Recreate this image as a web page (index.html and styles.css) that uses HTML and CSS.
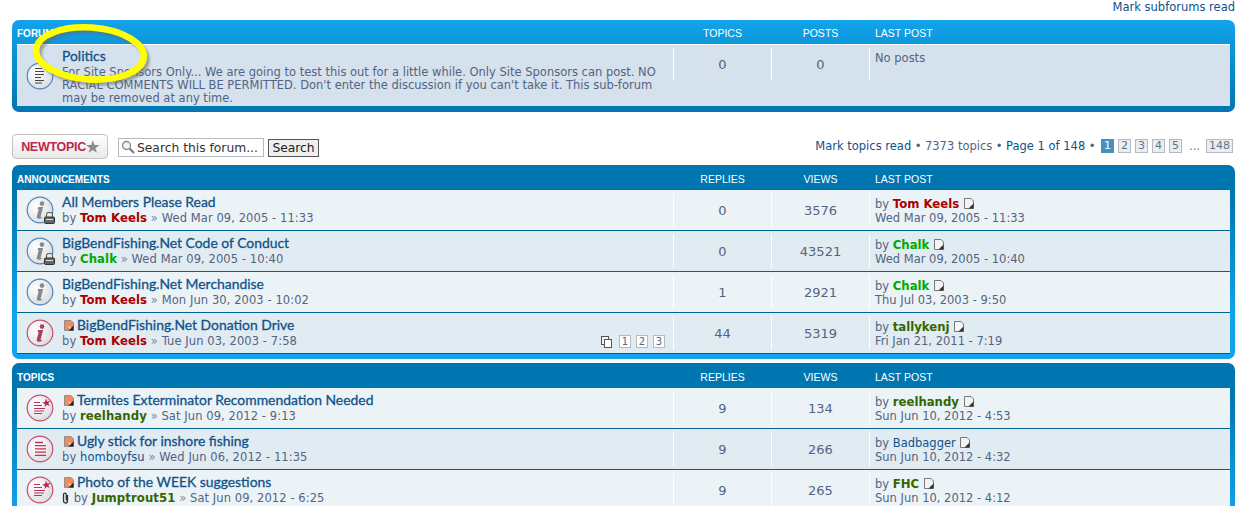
FILE: index.html
```html
<!DOCTYPE html>
<html lang="en">
<head>
<meta charset="utf-8">
<title>Forum</title>
<link rel="stylesheet" href="styles.css">
</head>
<body>
<svg class="sprite" width="0" height="0" aria-hidden="true">
  <defs>
    <radialGradient id="disc" cx="0.35" cy="0.35" r="0.8"><stop offset="0" stop-color="#ffffff"/><stop offset="1" stop-color="#d5d8dc"/></radialGradient>
    <filter id="soft" x="-10%" y="-10%" width="120%" height="120%"><feGaussianBlur stdDeviation="1"/></filter>
    <symbol id="i-info" viewBox="0 0 28 28">
      <circle cx="14" cy="14" r="12.800" fill="url(#disc)" stroke="#4f87bd" stroke-width="1.200"/>
      <circle cx="16" cy="7.600" r="2.300" fill="#85898f"/>
      <path d="M12.300 11h4.900l-2.600 9.500c-.2.800.4.900 1.600.4l-.2 1.200c-2.900 1.200-5.700.7-5.200-1.700l1.900-7.100-1.300-.5z" fill="#85898f"/>
    </symbol>
    <symbol id="i-info-red" viewBox="0 0 28 28">
      <circle cx="14" cy="14" r="12.800" fill="url(#disc)" stroke="#c9506f" stroke-width="1.200"/>
      <circle cx="16" cy="7.600" r="2.300" fill="#a8415f"/>
      <path d="M12.300 11h4.900l-2.600 9.500c-.2.800.4.900 1.600.4l-.2 1.200c-2.900 1.200-5.700.7-5.200-1.700l1.900-7.100-1.300-.5z" fill="#a8415f"/>
    </symbol>
    <symbol id="i-forum" viewBox="0 0 28 28">
      <circle cx="14" cy="14" r="12.800" fill="url(#disc)" stroke="#4f87bd" stroke-width="1.200"/>
      <path d="M9 6.500h7M9 9.500h9M9 12.500h9M9 15.500h6M9 18.500h9M9 21h7" stroke="#444" stroke-width="1.100" fill="none"/>
    </symbol>
    <symbol id="i-topic" viewBox="0 0 28 28">
      <circle cx="14" cy="14" r="12.800" fill="url(#disc)" stroke="#c9506f" stroke-width="1.200"/>
      <path d="M9 7.500h8M9 10.700h11M9 13.900h11M9 17.100h11M9 20.300h11" stroke="#c42f5a" stroke-width="1.300" fill="none"/>
    </symbol>
    <symbol id="i-topic-new" viewBox="0 0 28 28">
      <circle cx="14" cy="14" r="12.800" fill="url(#disc)" stroke="#c9506f" stroke-width="1.200"/>
      <path d="M8 8.500h6M8 11.500h8M8 14.500h11M8 17h10M8 19.500h8" stroke="#c42f5a" stroke-width="1.200" fill="none"/>
      <path d="M20 4.500l1.100 3 3.100-.6-2 2.300 1.600 2.700-3-1.100-2.100 2.300.2-3.100-2.800-1.300 3-.9z" fill="#b8264f"/>
    </symbol>
    <symbol id="i-lock" viewBox="0 0 11 12">
      <rect x="2.500" y=".5" width="6" height="6" rx="2" fill="#e8e8e8" stroke="#444"/>
      <rect x=".5" y="5" width="10" height="6.500" rx="1" fill="#666" stroke="#333"/>
      <path d="M2 7.500h7" stroke="#ddd"/>
    </symbol>
    <symbol id="i-new" viewBox="0 0 10 11">
      <path d="M.5.500h6.500l2.500 2.500v7.500h-9z" fill="#f28a5e" stroke="#8f8f8f"/>
      <path d="M9.500 5.500v5h-5z" fill="#222"/>
      <path d="M4.500 6.500l2.500 2" stroke="#fff"/>
    </symbol>
    <symbol id="i-latest" viewBox="0 0 10 11">
      <path d="M.5.500h6.500l2.500 2.500v7.500h-9z" fill="#f4f4f4" stroke="#777"/>
      <path d="M9.500 5.500v5h-5z" fill="#333"/>
    </symbol>
    <symbol id="i-pages" viewBox="0 0 11 12">
      <rect x=".5" y=".5" width="7" height="8" fill="#f4f4f4" stroke="#555"/>
      <rect x="3.500" y="3.500" width="7" height="8" fill="#fff" stroke="#555"/>
    </symbol>
    <symbol id="i-clip" viewBox="0 0 7 12">
      <path d="M5.500 3v6a2 2 0 0 1-4 0V2.500a1.400 1.400 0 0 1 2.800 0V8.500" fill="none" stroke="#333" stroke-width="1.300"/>
    </symbol>
    <symbol id="i-mag" viewBox="0 0 14 14">
      <circle cx="5.500" cy="5.500" r="4" fill="#f4f4f4" stroke="#8a8a8a" stroke-width="1.300"/>
      <path d="M8.500 8.500l4.500 4.500" stroke="#777" stroke-width="2"/>
    </symbol>
  </defs>
</svg>

<div class="page">
  <p class="markline"><a href="#">Mark subforums read</a></p>

  <section class="block block-up">
    <div class="head">
      <span class="h-name">FORUM</span><span class="h-num">TOPICS</span><span class="h-num">POSTS</span><span class="h-last">LAST POST</span>
    </div>
    <div class="row row-forum">
      <div class="c-name">
        <svg class="ico"><use href="#i-forum"/></svg>
        <div class="txt">
          <a class="title" href="#">Politics</a>
          <p class="desc">For Site Sponsors Only... We are going to test this out for a little while. Only Site Sponsors can post. NO RACIAL COMMENTS WILL BE PERMITTED. Don't enter the discussion if you can't take it. This sub-forum may be removed at any time.</p>
        </div>
      </div>
      <div class="c-num">0</div>
      <div class="c-num">0</div>
      <div class="c-last">No posts</div>
    </div>
  </section>

  <div class="actions">
    <a class="newtopic" href="#">NEWTOPIC<span class="star">★</span></a>
    <form class="search">
      <label class="s-box"><svg class="s-mag"><use href="#i-mag"/></svg><span>Search this forum...</span></label>
      <button class="s-btn" type="button">Search</button>
    </form>
    <div class="pager">
      <a href="#">Mark topics read</a><span class="dot">•</span><span>7373 topics</span><span class="dot">•</span><a href="#">Page 1 of 148</a><span class="dot">•</span>
      <span class="pages">
        <span class="pg pg-on">1</span><a class="pg" href="#">2</a><a class="pg" href="#">3</a><a class="pg" href="#">4</a><a class="pg" href="#">5</a><span class="ell">...</span><a class="pg pg-wide" href="#">148</a>
      </span>
    </div>
  </div>

  <section class="block block-down">
    <div class="head">
      <span class="h-name">ANNOUNCEMENTS</span><span class="h-num">REPLIES</span><span class="h-num">VIEWS</span><span class="h-last">LAST POST</span>
    </div>
    <div class="row bg1">
      <div class="c-name">
        <span class="ico-wrap"><svg class="ico"><use href="#i-info"/></svg><svg class="lock"><use href="#i-lock"/></svg></span>
        <div class="txt"><a class="title" href="#">All Members Please Read</a><p class="by">by <b class="red">Tom Keels</b> <span class="raq">»</span> Wed Mar 09, 2005 - 11:33</p></div>
      </div>
      <div class="c-num">0</div><div class="c-num">3576</div>
      <div class="c-last"><p>by <b class="red">Tom Keels</b> <svg class="latest"><use href="#i-latest"/></svg></p><p>Wed Mar 09, 2005 - 11:33</p></div>
    </div>
    <div class="row bg2">
      <div class="c-name">
        <span class="ico-wrap"><svg class="ico"><use href="#i-info"/></svg><svg class="lock"><use href="#i-lock"/></svg></span>
        <div class="txt"><a class="title" href="#">BigBendFishing.Net Code of Conduct</a><p class="by">by <b class="lime">Chalk</b> <span class="raq">»</span> Wed Mar 09, 2005 - 10:40</p></div>
      </div>
      <div class="c-num">0</div><div class="c-num">43521</div>
      <div class="c-last"><p>by <b class="lime">Chalk</b> <svg class="latest"><use href="#i-latest"/></svg></p><p>Wed Mar 09, 2005 - 10:40</p></div>
    </div>
    <div class="row bg1">
      <div class="c-name">
        <span class="ico-wrap"><svg class="ico"><use href="#i-info"/></svg></span>
        <div class="txt"><a class="title" href="#">BigBendFishing.Net Merchandise</a><p class="by">by <b class="red">Tom Keels</b> <span class="raq">»</span> Mon Jun 30, 2003 - 10:02</p></div>
      </div>
      <div class="c-num">1</div><div class="c-num">2921</div>
      <div class="c-last"><p>by <b class="lime">Chalk</b> <svg class="latest"><use href="#i-latest"/></svg></p><p>Thu Jul 03, 2003 - 9:50</p></div>
    </div>
    <div class="row bg2">
      <div class="c-name">
        <span class="ico-wrap"><svg class="ico"><use href="#i-info-red"/></svg></span>
        <div class="txt"><svg class="newp"><use href="#i-new"/></svg><a class="title" href="#">BigBendFishing.Net Donation Drive</a><p class="by">by <b class="red">Tom Keels</b> <span class="raq">»</span> Tue Jun 03, 2003 - 7:58</p></div>
        <span class="minipages"><svg class="pagesico"><use href="#i-pages"/></svg><a class="mp" href="#">1</a><a class="mp" href="#">2</a><a class="mp" href="#">3</a></span>
      </div>
      <div class="c-num">44</div><div class="c-num">5319</div>
      <div class="c-last"><p>by <b class="olive">tallykenj</b> <svg class="latest"><use href="#i-latest"/></svg></p><p>Fri Jan 21, 2011 - 7:19</p></div>
    </div>
  </section>

  <section class="block block-down block-topics">
    <div class="head">
      <span class="h-name">TOPICS</span><span class="h-num">REPLIES</span><span class="h-num">VIEWS</span><span class="h-last">LAST POST</span>
    </div>
    <div class="row bg1">
      <div class="c-name">
        <span class="ico-wrap"><svg class="ico"><use href="#i-topic-new"/></svg></span>
        <div class="txt"><svg class="newp"><use href="#i-new"/></svg><a class="title" href="#">Termites Exterminator Recommendation Needed</a><p class="by">by <b class="olive">reelhandy</b> <span class="raq">»</span> Sat Jun 09, 2012 - 9:13</p></div>
      </div>
      <div class="c-num">9</div><div class="c-num">134</div>
      <div class="c-last"><p>by <b class="olive">reelhandy</b> <svg class="latest"><use href="#i-latest"/></svg></p><p>Sun Jun 10, 2012 - 4:53</p></div>
    </div>
    <div class="row bg2">
      <div class="c-name">
        <span class="ico-wrap"><svg class="ico"><use href="#i-topic"/></svg></span>
        <div class="txt"><svg class="newp"><use href="#i-new"/></svg><a class="title" href="#">Ugly stick for inshore fishing</a><p class="by">by <a class="user" href="#">homboyfsu</a> <span class="raq">»</span> Wed Jun 06, 2012 - 11:35</p></div>
      </div>
      <div class="c-num">9</div><div class="c-num">266</div>
      <div class="c-last"><p>by <a class="user" href="#">Badbagger</a> <svg class="latest"><use href="#i-latest"/></svg></p><p>Sun Jun 10, 2012 - 4:32</p></div>
    </div>
    <div class="row bg1">
      <div class="c-name">
        <span class="ico-wrap"><svg class="ico"><use href="#i-topic-new"/></svg></span>
        <div class="txt"><svg class="newp"><use href="#i-new"/></svg><a class="title" href="#">Photo of the WEEK suggestions</a><p class="by"><svg class="clip"><use href="#i-clip"/></svg> by <b class="olive">Jumptrout51</b> <span class="raq">»</span> Sat Jun 09, 2012 - 6:25</p></div>
      </div>
      <div class="c-num">9</div><div class="c-num">265</div>
      <div class="c-last"><p>by <b class="olive">FHC</b> <svg class="latest"><use href="#i-latest"/></svg></p><p>Sun Jun 10, 2012 - 4:12</p></div>
    </div>
  </section>

  <svg class="ring" viewBox="0 0 130 70" aria-hidden="true">
    <g transform="rotate(4 61 32)">
      <ellipse class="ring-shadow" cx="64" cy="35.500" rx="54" ry="26"/>
      <ellipse class="ring-line" cx="61" cy="32.500" rx="54" ry="26"/>
    </g>
  </svg>
</div>
</body>
</html>
```

FILE: styles.css
```css
* { box-sizing: border-box; }
html, body { margin: 0; padding: 0; height: 506px; overflow: hidden; background: #fff; }
body { font: 11.500px/13px "DejaVu Sans", Verdana, sans-serif; color: #536482; }
p { margin: 0; }
b { font-size: 11.700px; }
a { color: #105289; text-decoration: none; }
.sprite { position: absolute; }

.page { position: relative; height: 506px; padding: 0 12px; overflow: hidden; }
.markline { height: 20px; padding: 1px 0 0; text-align: right; }

.block { border-radius: 7px; padding: 0 5px; }
.block-up { height: 92px; background: linear-gradient(#12a3eb 0, #0076b1 100%); padding-bottom: 6px; }
.block-down { background: linear-gradient(#0076b1 0, #0076b1 30px, #12a3eb 150px); padding-bottom: 5px; }
.block-topics { margin-top: 4px; height: 160px; }

.head { display: grid; grid-template-columns: 656px 98px 98px 361px; height: 25px; align-items: center; color: #fff; font: 10.500px/13px "Liberation Sans", Arial, sans-serif; padding-top: 3px; }
.block-up .head { height: 24px; padding-top: 2px; }
.h-name { font-weight: bold; font-size: 10px; }
.h-num { text-align: center; padding-left: 1px; }
.h-last { padding-left: 6px; }

.row { display: grid; grid-template-columns: 656px 98px 98px 361px; height: 41px; border-bottom: 1px solid #00608f; }
.bg1 { background: #ecf3f7; }
.bg2 { background: #e1ebf2; }
.row-forum { height: 62px; background: #d5e1ec; border-top: 1px solid #fff; border-bottom: 0; }

.c-name { display: flex; position: relative; padding-left: 9px; }
.ico-wrap { position: relative; display: block; width: 36px; height: 40px; padding-top: 6px; flex: none; }
.ico { display: block; width: 28px; height: 28px; flex: none; }
.row-forum .ico { margin-top: 17px; margin-right: 8px; }
.lock { position: absolute; left: 18px; top: 22px; width: 11px; height: 12px; }
.txt { flex: 1; padding-top: 4px; min-width: 0; }
.row-forum .txt { padding-top: 3px; }
.title { font: 13.900px/16px Lato, "Noto Sans", sans-serif; color: #105289; -webkit-text-stroke: .3px #105289; }
.newp { width: 10px; height: 11px; margin: 0 3px 0 2px; vertical-align: -1px; }
.by { padding-top: 2px; letter-spacing: .08px; }
.desc { margin-top: 2px; width: 600px; }
.red { color: #aa0000; }
.lime { color: #00aa00; }
.olive { color: #336600; }
.user { color: #105289; }
.raq { color: #7a8aa0; }
.clip { width: 7px; height: 12px; vertical-align: -2px; margin-right: 1px; }

.c-num { margin: 3px 0; border-left: 1px solid #fff; display: flex; justify-content: center; padding-top: 11px; font-size: 13px; line-height: 14px; }
.row-forum .c-num { padding-top: 10px; margin: 3px 0 26px; }
.c-last { margin: 3px 0; border-left: 1px solid #fff; padding: 4px 0 0 5px; line-height: 14px; }
.row-forum .c-last { margin: 3px 0 26px; padding-top: 3px; }
.latest { width: 10px; height: 11px; vertical-align: -1px; margin-left: 1px; }

.minipages { position: absolute; right: 8px; bottom: 5px; display: flex; gap: 5px; align-items: center; }
.pagesico { width: 11px; height: 12px; margin-right: 2px; }
.mp { width: 12px; height: 13px; border: 1px solid #b4bac0; background: #fff; color: #536482; font-size: 10px; line-height: 11px; text-align: center; }

.actions { display: flex; align-items: flex-start; height: 53px; padding-top: 22px; }
.newtopic { display: flex; align-items: center; justify-content: center; width: 96px; height: 25px; border: 1px solid #c7c3bf; border-radius: 4px; background: linear-gradient(#ffffff, #e9e9e9); color: #bc2a4d; font: bold 12.500px/14px "Liberation Sans", Arial, sans-serif; letter-spacing: -.3px; }
.star { color: #8a8a8a; font-size: 15px; line-height: 14px; letter-spacing: 0; }
.search { display: flex; gap: 4px; margin: 4px 0 0 10px; }
.s-box { display: flex; align-items: center; width: 146px; height: 19px; border: 1px solid #b4bac0; background: #fff; color: #333; font-size: 12.300px; line-height: 15px; padding: 1px 0 0 2px; white-space: nowrap; }
.s-mag { width: 14px; height: 14px; margin: -2px 2px 0 0; flex: none; }
.s-btn { width: 51px; height: 18px; margin-top: 1px; padding: 0 0 1px; border: 1px solid #555; background: #efefef; color: #222; font: 12.300px/14px "DejaVu Sans", sans-serif; }
.pager { margin-left: auto; display: flex; align-items: center; white-space: nowrap; height: 16px; margin-top: 4px; padding-right: 2px; }
.dot { margin: 0 3.500px; }
.pages { display: flex; align-items: center; gap: 4px; margin-left: 2px; }
.pg { min-width: 13px; height: 14px; padding: 0 1px; border: 1px solid #b4bac0; background: #ecedee; color: #5c758c; font-size: 11px; line-height: 12px; text-align: center; }
.pg-wide { padding: 0 2px; }
.pg-on { background: #4692bf; border-color: #4692bf; color: #fff; }
.ell { margin: 0 2px 0 3px; color: #5c758c; }

.ring { position: absolute; left: 29px; top: 21px; width: 130px; height: 70px; }
.ring-shadow { fill: none; stroke: #666; stroke-opacity: .55; stroke-width: 6px; filter: url(#soft); }
.ring-line { fill: none; stroke: #ffff00; stroke-width: 6.500px; }
```
